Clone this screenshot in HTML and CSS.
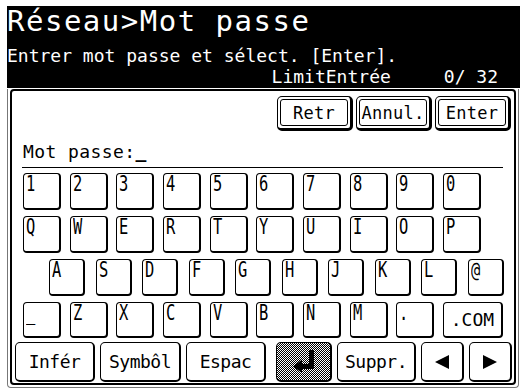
FILE: index.html
```html
<!DOCTYPE html>
<html lang="fr">
<head>
    <meta charset="UTF-8">
    <meta name="viewport" content="width=device-width, initial-scale=1.0">
    <title>Réseau&gt;Mot passe</title>
    <link rel="stylesheet" href="styles.css">
</head>
<body>
    <div class="header">
        <div class="title">Réseau&gt;Mot passe</div>
        <div class="info">Entrer mot passe et sélect. [Enter].</div>
        <div class="info limit"><span>LimitEntrée</span><span>0/ 32</span></div>
    </div>

    <div class="panel">
        <div class="panel-inner">
            <div class="actions">
                <div class="act"><span>Retr</span></div>
                <div class="act"><span>Annul.</span></div>
                <div class="act"><span>Enter</span></div>
            </div>

            <div class="field">Mot passe:<b class="cursor">_</b></div>

            <div class="keys">
                <div class="row">
                    <div class="key"><span>1</span></div>
                    <div class="key"><span>2</span></div>
                    <div class="key"><span>3</span></div>
                    <div class="key"><span>4</span></div>
                    <div class="key"><span>5</span></div>
                    <div class="key"><span>6</span></div>
                    <div class="key"><span>7</span></div>
                    <div class="key"><span>8</span></div>
                    <div class="key"><span>9</span></div>
                    <div class="key"><span>0</span></div>
                </div>
                <div class="row">
                    <div class="key"><span>Q</span></div>
                    <div class="key"><span>W</span></div>
                    <div class="key"><span>E</span></div>
                    <div class="key"><span>R</span></div>
                    <div class="key"><span>T</span></div>
                    <div class="key"><span>Y</span></div>
                    <div class="key"><span>U</span></div>
                    <div class="key"><span>I</span></div>
                    <div class="key"><span>O</span></div>
                    <div class="key"><span>P</span></div>
                </div>
                <div class="row row-a">
                    <div class="key"><span>A</span></div>
                    <div class="key"><span>S</span></div>
                    <div class="key"><span>D</span></div>
                    <div class="key"><span>F</span></div>
                    <div class="key"><span>G</span></div>
                    <div class="key"><span>H</span></div>
                    <div class="key"><span>J</span></div>
                    <div class="key"><span>K</span></div>
                    <div class="key"><span>L</span></div>
                    <div class="key"><span>@</span></div>
                </div>
                <div class="row row-z">
                    <div class="key"><span>_</span></div>
                    <div class="key"><span>Z</span></div>
                    <div class="key"><span>X</span></div>
                    <div class="key"><span>C</span></div>
                    <div class="key"><span>V</span></div>
                    <div class="key"><span>B</span></div>
                    <div class="key"><span>N</span></div>
                    <div class="key"><span>M</span></div>
                    <div class="key"><span>.</span></div>
                    <div class="key key-com">.COM</div>
                </div>
                <div class="row row-bottom">
                    <div class="bkey w-80">Infér</div>
                    <div class="bkey w-81">Symbôl</div>
                    <div class="bkey w-80">Espac</div>
                    <div class="bkey bkey-enter">
                        <svg width="22" height="23" viewBox="0 0 22 23">
                            <rect x="16" y="0" width="5" height="19" fill="#000"/>
                            <rect x="8" y="14" width="13" height="5" fill="#000"/>
                            <polygon points="0,16.5 9,9.5 9,23" fill="#000"/>
                        </svg>
                    </div>
                    <div class="bkey w-79">Suppr.</div>
                    <div class="bkey w-43">
                        <svg width="14" height="14" viewBox="0 0 14 14"><polygon points="14,0 14,14 0,7" fill="#000"/></svg>
                    </div>
                    <div class="bkey w-43">
                        <svg width="14" height="14" viewBox="0 0 14 14"><polygon points="0,0 14,7 0,14" fill="#000"/></svg>
                    </div>
                </div>
            </div>
        </div>
    </div>
</body>
</html>
```

FILE: styles.css
```css
body {
    margin: 0;
    width: 520px;
    height: 390px;
    overflow: hidden;
    background: #fff;
    color: #000;
    font-family: "DejaVu Sans Mono", "Liberation Mono", monospace;
}

/* bandeau noir du haut */
.header {
    margin: 6px 0 0 7px;
    height: 82px;
    background: #000;
    color: #fff;
}
.title {
    font-size: 29px;
    line-height: 30px;
    letter-spacing: 1.5px;
}
.info {
    font-size: 18px;
    line-height: 21px;
}
.title + .info {
    margin-top: 9px;
}
.limit {
    display: flex;
    justify-content: flex-end;
    gap: 53px;
    padding-right: 22px;
}

/* cadre du clavier */
.panel {
    margin: 1px 1px 0 7px;
    border: 1px solid #777;
    border-top: 0;
    border-radius: 0 0 4px 4px;
    padding: 0 2px 2px;
}
.panel-inner {
    box-sizing: border-box;
    height: 296px;
    border: 2px solid #000;
    border-radius: 4px;
    padding-top: 5px;
}

.actions {
    display: flex;
    justify-content: flex-end;
    gap: 3px;
    padding-right: 3px;
}
.act {
    box-sizing: border-box;
    width: 76px;
    height: 35px;
    border: 1px solid #000;
    border-right-width: 3px;
    border-bottom-width: 3px;
    border-radius: 5px;
    padding: 2px;
}
.act span {
    box-sizing: border-box;
    display: flex;
    align-items: center;
    justify-content: center;
    height: 100%;
    border: 1px solid #000;
    border-radius: 3px;
    font-size: 17px;
    letter-spacing: 0.3px;
}

.field {
    margin: 10px 11px 0 10px;
    padding: 0 0 5px 1px;
    border-bottom: 1px solid #000;
    font-size: 18px;
    line-height: 21px;
    letter-spacing: 0.4px;
}
.cursor {
    font-weight: bold;
}

.keys {
    margin-top: 5px;
}
.row {
    display: flex;
    gap: 8.67px;
    margin-left: 11px;
    margin-bottom: 6px;
}
.key {
    box-sizing: border-box;
    width: 38px;
    height: 37px;
    border: 1px solid #000;
    border-right-width: 2px;
    border-bottom-width: 2px;
    border-radius: 4px;
    padding: 1px 0 0 2px;
    background: #fff;
}
.key span {
    display: block;
    font-size: 22px;
    line-height: 18px;
    transform: scaleX(0.7);
    transform-origin: 0 0;
}
.row-a {
    margin-left: 37px;
    gap: 10.5px;
}
.row-a .key {
    width: 36px;
}
.row-z {
    margin-bottom: 4px;
}
.row-z .key {
    height: 36px;
}
.key-com {
    width: 60px !important;
    display: flex;
    align-items: center;
    justify-content: center;
    padding: 0;
    font-size: 18px;
}

.row-bottom {
    margin: 0 0 0 3px;
    gap: 5px;
}
.bkey {
    box-sizing: border-box;
    height: 40px;
    display: flex;
    align-items: center;
    justify-content: center;
    border: 1px solid #000;
    border-right-width: 2px;
    border-bottom-width: 2px;
    border-radius: 5px;
    font-size: 18px;
    letter-spacing: -0.5px;
}
.w-79 { width: 79px; }
.w-80 { width: 80px; }
.w-81 { width: 81px; }
.w-43 { width: 43px; }
.bkey-enter {
    width: 56px;
    margin-left: 5px;
    background: repeating-conic-gradient(#000 0% 25%, #fff 0% 50%) 0 0 / 2px 2px;
}
```
